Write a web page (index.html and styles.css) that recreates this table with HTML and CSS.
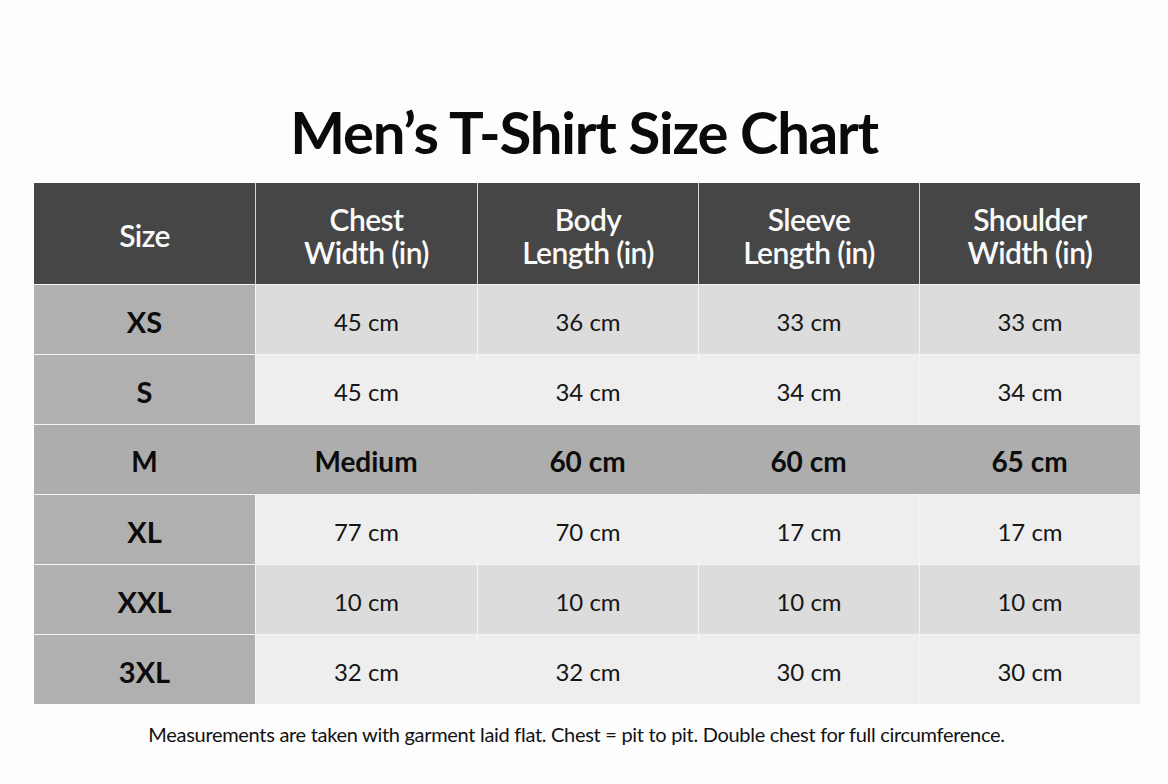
FILE: index.html
```html
<!DOCTYPE html>
<html lang="en">
<head>
<meta charset="utf-8">
<title>Men's T-Shirt Size Chart</title>
<link rel="stylesheet" href="styles.css">
</head>
<body>
<main class="page">
  <h1 class="title">Men’s T-Shirt Size Chart</h1>
  <div class="chart">
    <div class="row head">
      <div class="cell">Size</div>
      <div class="cell">Chest<br>Width (in)</div>
      <div class="cell">Body<br>Length (in)</div>
      <div class="cell">Sleeve<br>Length (in)</div>
      <div class="cell">Shoulder<br>Width (in)</div>
    </div>
    <div class="row mid">
      <div class="cell size">XS</div>
      <div class="cell">45 cm</div>
      <div class="cell">36 cm</div>
      <div class="cell">33 cm</div>
      <div class="cell">33 cm</div>
    </div>
    <div class="row light">
      <div class="cell size">S</div>
      <div class="cell">45 cm</div>
      <div class="cell">34 cm</div>
      <div class="cell">34 cm</div>
      <div class="cell">34 cm</div>
    </div>
    <div class="row hl">
      <div class="cell size">M</div>
      <div class="cell">Medium</div>
      <div class="cell">60 cm</div>
      <div class="cell">60 cm</div>
      <div class="cell">65 cm</div>
    </div>
    <div class="row light">
      <div class="cell size">XL</div>
      <div class="cell">77 cm</div>
      <div class="cell">70 cm</div>
      <div class="cell">17 cm</div>
      <div class="cell">17 cm</div>
    </div>
    <div class="row mid">
      <div class="cell size">XXL</div>
      <div class="cell">10 cm</div>
      <div class="cell">10 cm</div>
      <div class="cell">10 cm</div>
      <div class="cell">10 cm</div>
    </div>
    <div class="row light">
      <div class="cell size">3XL</div>
      <div class="cell">32 cm</div>
      <div class="cell">32 cm</div>
      <div class="cell">30 cm</div>
      <div class="cell">30 cm</div>
    </div>
  </div>
  <p class="note">Measurements are taken with garment laid flat. Chest = pit to pit. Double chest for full circumference.</p>
</main>
</body>
</html>
```

FILE: styles.css
```css
*, *::before, *::after {
  box-sizing: border-box;
}
html, body {
  margin: 0;
  padding: 0;
  background: #fdfdfd;
}
body {
  font-family: Lato, "Open Sans", sans-serif;
  color: #111;
  width: 1168px;
  height: 784px;
  overflow: hidden;
}
.page {
  display: flex;
  flex-direction: column;
  align-items: center;
  padding-top: 96px;
}
.title {
  margin: 0;
  font-size: 58px;
  line-height: 72px;
  font-weight: 700;
  letter-spacing: -1.2px;
  color: #0a0a0a;
  height: 87px;
}
.chart {
  width: 1106px;
  margin-left: 6px;
  display: flex;
  flex-direction: column;
}
.row {
  display: grid;
  grid-template-columns: 221px 222px 221px 221px 221px;
  height: 70px;
  border-top: 1px solid #f4f4f4;
}
.cell {
  display: flex;
  align-items: center;
  justify-content: center;
  text-align: center;
  font-size: 24px;
  color: #161616;
  padding-top: 3px;
  border-left: 1px solid #f4f4f4;
}
.cell:first-child {
  border-left: none;
}
.row.head {
  height: 101px;
  background: #464646;
  border-top: none;
}
.row.head .cell {
  color: #fafafa;
  font-size: 30px;
  line-height: 33px;
  font-weight: 600;
  letter-spacing: -0.6px;
  padding-top: 4px;
  border-left-color: #d8d8d8;
}
.row.mid .cell {
  background: #dcdcdc;
}
.row.light .cell {
  background: #eeeeee;
}
.row .cell.size {
  background: #b0b0b0;
  font-size: 29px;
  font-weight: 700;
  color: #0c0c0c;
}
.row.hl .cell {
  background: #adadad;
  border-left: none;
  font-weight: 700;
  font-size: 28px;
  color: #0c0c0c;
}
.note {
  margin: 18px 0 0 -15px;
  font-size: 20px;
  color: #111;
  letter-spacing: -0.3px;
}
```
